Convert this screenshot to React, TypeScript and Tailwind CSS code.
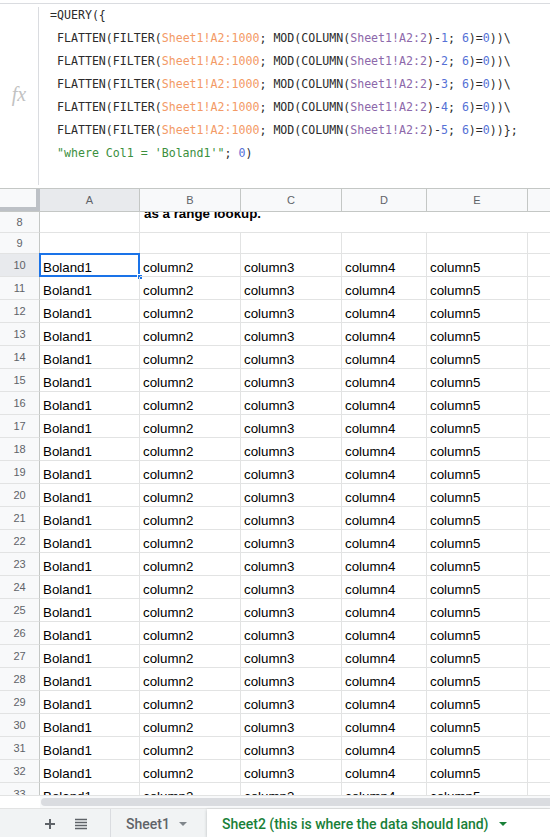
import React from 'react'

const mono = { fontFamily: '"DejaVu Sans Mono", monospace' }

const Or = ({ children }: { children: React.ReactNode }) => <span className="text-[#f39a66]">{children}</span>
const Pu = ({ children }: { children: React.ReactNode }) => <span className="text-[#8c68aa]">{children}</span>
const Bl = ({ children }: { children: React.ReactNode }) => <span className="text-[#5571d6]">{children}</span>
const Gr = ({ children }: { children: React.ReactNode }) => <span className="text-[#3b8f3e]">{children}</span>

const FlattenLine = ({ n, last }: { n: number; last?: boolean }) => (
  <div>
    {' FLATTEN(FILTER('}
    <Or>Sheet1!A2:1000</Or>
    {'; MOD(COLUMN('}
    <Pu>Sheet1!A2:2</Pu>
    {')-'}
    <Bl>{n}</Bl>
    {'; '}
    <Bl>6</Bl>
    {')='}
    <Bl>0</Bl>
    {last ? '))};' : '))\\'}
  </div>
)

// column widths include the right grid line
const cols = [
  { key: 'A', w: 'w-[100px]' },
  { key: 'B', w: 'w-[101px]' },
  { key: 'C', w: 'w-[101px]' },
  { key: 'D', w: 'w-[85px]' },
  { key: 'E', w: 'w-[101px]' },
]

const values = ['Boland1', 'column2', 'column3', 'column4', 'column5']
const dataRows = Array.from({ length: 24 }, (_, i) => i + 10)

const RowHeader = ({ n, active }: { n: number; active?: boolean }) => (
  <div
    className={`w-[40px] shrink-0 border-r border-r-[#c4c7c5] flex items-center justify-center text-[11px] text-[#5f6368] ${
      active ? 'bg-[#e8eaed]' : 'bg-[#f8f9fa]'
    }`}
  >
    {n}
  </div>
)

export default function App() {
  return (
    <div
      className="w-[550px] h-[837px] overflow-hidden bg-white flex flex-col pt-[3px]"
      style={{ fontFamily: '"Liberation Sans", Arial, sans-serif' }}
    >
      {/* Formula bar */}
      <div className="h-[185px] shrink-0 border-t border-[#dadce0] flex">
        <div className="w-[39px] shrink-0 my-[3px] border-r border-[#dadce0] flex items-center justify-center">
          <span className="text-[20px] italic text-[#c2c2c2] -mt-[4px]" style={{ fontFamily: '"Liberation Serif", serif' }}>
            fx
          </span>
        </div>
        <div className="pl-[11px] text-[11.6px] leading-[23px] text-[#2b2b2b] whitespace-pre" style={mono}>
          <div>{'=QUERY({'}</div>
          <FlattenLine n={1} />
          <FlattenLine n={2} />
          <FlattenLine n={3} />
          <FlattenLine n={4} />
          <FlattenLine n={5} last />
          <div>
            {' '}
            <Gr>"where Col1 = 'Boland1'"</Gr>
            {'; '}
            <Bl>0</Bl>
            {')'}
          </div>
        </div>
      </div>

      {/* Column headers */}
      <div className="h-[24px] shrink-0 flex border-t border-b border-[#c4c7c5] text-[11px] text-[#5f6368]">
        <div className="w-[40px] shrink-0 bg-[#f8f9fa] border-r-[4px] border-b-[4px] border-[#bdc1c6]" />
        {cols.map((c) => (
          <div
            key={c.key}
            className={`${c.w} shrink-0 border-r border-[#c4c7c5] flex items-center justify-center ${
              c.key === 'A' ? 'bg-[#e8eaed]' : 'bg-[#f8f9fa]'
            }`}
          >
            {c.key}
          </div>
        ))}
        <div className="flex-1 bg-[#f8f9fa]" />
      </div>

      {/* Grid body */}
      <div className="flex-1 overflow-hidden flex flex-col text-[13.33px] text-black">
        {/* row 8 (partly scrolled) */}
        <div className="h-[21px] shrink-0 flex">
          <div className="w-[40px] shrink-0 border-r border-b border-r-[#c4c7c5] border-b-[#e2e3e3] bg-[#f8f9fa] flex items-center justify-center text-[11px] text-[#5f6368]">
            8
          </div>
          <div className="w-[100px] shrink-0 border-r border-b border-[#e2e3e3]" />
          <div className="flex-1 border-b border-[#e2e3e3] overflow-hidden pl-[4px]">
            <div className="font-bold leading-[15px] -mt-[6px] whitespace-nowrap">as a range lookup.</div>
          </div>
        </div>
        {/* row 9 */}
        <div className="h-[21px] shrink-0 flex">
          <div className="w-[40px] shrink-0 border-r border-b border-r-[#c4c7c5] border-b-[#e2e3e3] bg-[#f8f9fa] flex items-center justify-center text-[11px] text-[#5f6368]">
            9
          </div>
          {cols.map((c) => (
            <div key={c.key} className={`${c.w} shrink-0 border-r border-b border-[#e2e3e3]`} />
          ))}
          <div className="flex-1 border-b border-[#e2e3e3]" />
        </div>
        {dataRows.map((r) => (
          <div key={r} className="h-[23px] shrink-0 flex">
            <div
              className={`w-[40px] shrink-0 border-r border-b border-r-[#c4c7c5] border-b-[#e2e3e3] flex items-center justify-center text-[11px] text-[#5f6368] ${
                r === 10 ? 'bg-[#e8eaed]' : 'bg-[#f8f9fa]'
              }`}
            >
              {r}
            </div>
            {cols.map((c, i) => (
              <div
                key={c.key}
                className={`${c.w} shrink-0 border-r border-b border-[#e2e3e3] flex items-end pl-[3px] pb-[1px] leading-[15px] relative`}
              >
                {values[i]}
                {r === 10 && i === 0 && (
                  <>
                    <div className="absolute -left-[1px] -top-[1px] right-[-1px] bottom-[-1px] border-2 border-[#1a73e8]" />
                    <div className="absolute -right-[4px] -bottom-[4px] w-[6px] h-[6px] bg-[#1a73e8] border border-white" />
                  </>
                )}
              </div>
            ))}
            <div className="flex-1 border-b border-[#e2e3e3]" />
          </div>
        ))}
      </div>

      {/* Horizontal scrollbar */}
      <div className="h-[13px] shrink-0 flex bg-[#f8f9fa] border-t border-[#e2e3e3]">
        <div className="w-[40px] shrink-0 bg-white" />
        <div className="flex-1 flex items-center pl-[1px]">
          <div className="w-full h-[8px] rounded-l-full bg-[#dadce0]" />
        </div>
      </div>

      {/* Sheet tabs */}
      <div className="h-[29px] shrink-0 flex bg-[#f1f3f4] border-t border-[#e2e3e3]">
        <div className="w-[110px] shrink-0 flex items-center pl-[44px] gap-[19px] pt-[2px]">
          <svg width="12" height="12" viewBox="0 0 12 12">
            <path d="M6 1v10M1 6h10" stroke="#5f6368" strokeWidth="2" />
          </svg>
          <svg width="12" height="12" viewBox="0 0 12 12">
            <path d="M0 1.5h12M0 4.5h12M0 7.5h12M0 10.5h12" stroke="#5f6368" strokeWidth="1.6" />
          </svg>
        </div>
        <div
          className="w-[97px] shrink-0 border-l border-[#dadce0] flex items-center pl-[15px] gap-[9px] text-[14px] font-medium text-[#5f6368] pt-[2px]"
          style={{ fontFamily: 'Roboto, sans-serif' }}
        >
          <span>Sheet1</span>
          <svg width="8" height="4" viewBox="0 0 8 4">
            <path d="M0 0h8L4 4z" fill="#80868b" />
          </svg>
        </div>
        <div
          className="flex-1 bg-white flex items-center pl-[15px] gap-[10px] text-[14px] font-medium text-[#188038] pt-[2px] whitespace-nowrap shadow-[0_1px_3px_rgba(60,64,67,0.3)]"
          style={{ fontFamily: 'Roboto, sans-serif' }}
        >
          <span>Sheet2 (this is where the data should land)</span>
          <svg width="8" height="4" viewBox="0 0 8 4" className="shrink-0">
            <path d="M0 0h8L4 4z" fill="#188038" />
          </svg>
        </div>
      </div>
    </div>
  )
}
